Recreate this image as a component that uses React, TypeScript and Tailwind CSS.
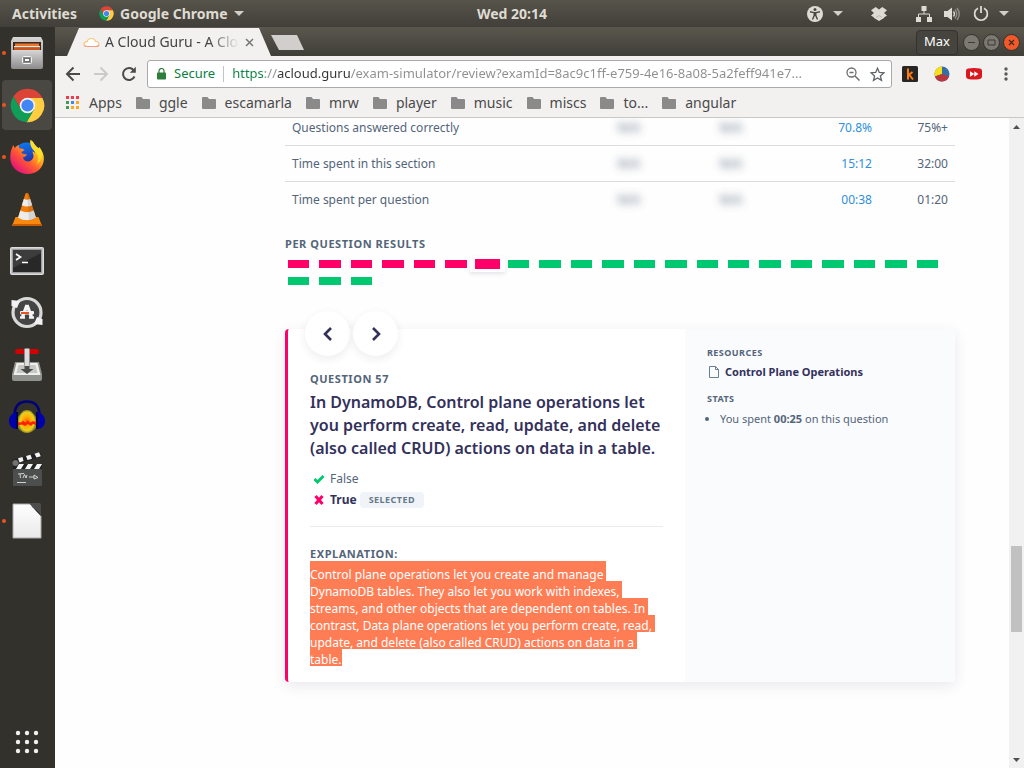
import React from "react";

const FONT = "font-['Noto_Sans','Open_Sans',sans-serif]";

function Caret() {
  return (
    <svg viewBox="0 0 10 5" className="h-[5px] w-[10px]" aria-hidden="true">
      <path d="M0 0h10L5 5z" fill="#d2cfc9" />
    </svg>
  );
}

function ChromeIcon({ className }: { className: string }) {
  const wedge = "M24 14H43.6A22 22 0 0 0 5.54 12.03L15.34 29Z";
  return (
    <svg viewBox="1 1 46 46" className={className} aria-hidden="true">
      <path d={wedge} fill="#db4437" />
      <path d={wedge} fill="#ffcd40" transform="rotate(120 24 24)" />
      <path d={wedge} fill="#0f9d58" transform="rotate(240 24 24)" />
      <circle cx="24" cy="24" r="10.2" fill="#f1f1f1" />
      <circle cx="24" cy="24" r="8" fill="#4285f4" />
    </svg>
  );
}

function FilesIcon() {
  return (
    <svg viewBox="0 0 36 36" className="size-9" aria-hidden="true">
      <defs>
        <linearGradient id="files" x1="0" y1="0" x2="0" y2="1">
          <stop offset="0" stopColor="#d6d6d6" />
          <stop offset="1" stopColor="#8f8f8f" />
        </linearGradient>
      </defs>
      <path d="M4 2h28l2 4v26q0 2-2 2H4q-2 0-2-2V6z" fill="url(#files)" />
      <rect x="4" y="7" width="28" height="9" fill="#3b2a22" />
      <rect x="6" y="8.500" width="24" height="2.500" fill="#e8772e" />
      <rect x="5" y="11" width="26" height="1.500" fill="#fbe3cf" />
      <rect x="5" y="12.500" width="26" height="2.500" fill="#c9541b" />
      <rect x="3" y="15" width="30" height="18" rx="1" fill="url(#files)" />
      <rect x="13.500" y="21.500" width="9" height="7" rx="1" fill="#8c8c8c" stroke="#f3f3f3" />
      <rect x="15.500" y="23.500" width="5" height="3" fill="#fff" stroke="#6d6d6d" />
    </svg>
  );
}

function FirefoxIcon() {
  return (
    <svg viewBox="0 0 36 36" className="size-9" aria-hidden="true">
      <defs>
        <linearGradient id="fox" x1="0.85" y1="0.1" x2="0.15" y2="0.9">
          <stop offset="0" stopColor="#fff44f" />
          <stop offset="0.35" stopColor="#ffa31f" />
          <stop offset="0.6" stopColor="#ff5634" />
          <stop offset="1" stopColor="#e3107f" />
        </linearGradient>
        <linearGradient id="globe" x1="0" y1="0" x2="0.3" y2="1">
          <stop offset="0" stopColor="#0a84ff" />
          <stop offset="1" stopColor="#2a1a8a" />
        </linearGradient>
      </defs>
      <circle cx="18" cy="17.500" r="14" fill="url(#globe)" />
      <path
        d="M4.500 6c.3 1.500.8 2.200 1.500 3 1-1.800 2.300-2.500 4-3-.4 1.600-.2 2.500.6 3.500 2-.3 3.600.2 5 1.500l-3 2c-.3 1.500.7 2 5.300 2.400-.5 1.600-2 2.200-4 3 .8 2.700 2.800 4.300 5.400 4.100 2.900-.2 5-2.400 5.200-5.200.1-1.900-.5-3.600-1.500-4.800 1.300.2 2.200.8 3 1.800C26.500 11 20.500 9 21.500 1c3.500 2 3.600 4.700 7 7.400 1 .8 1.500.8 2-.1 3 4 4.500 7.700 4.400 11.700C34.500 29 27.500 35 18.500 35 9.500 35 2 28.600 1.300 20 1 15 2 9.800 4.500 6z"
        fill="url(#fox)"
      />
      <path d="M21.500 1c-1 6 2 9.500 4.500 11.500 3.500 3 4.500 8 1.500 13 5-3.500 7.500-9.500 4-15.500l-1-1.700c-.5.900-1 .9-2 .1-3.400-2.700-3.500-5.400-7-7.400z" fill="#ffe226" opacity="0.85" />
    </svg>
  );
}

function VlcIcon() {
  return (
    <svg viewBox="0 0 36 36" className="size-9" aria-hidden="true">
      <path d="M6.500 26h23l3.500 9H3z" fill="#f8890c" />
      <path d="M3.600 33h28.800l.6 2H3z" fill="#c65b00" />
      <path d="M16.500 2.500q1.500-1 3 0L27 27q-9 5.500-18 0z" fill="#f47d0a" />
      <path d="M14.800 8q3.200 1.500 6.400 0l2 6.200q-5.200 2.400-10.400 0z" fill="#eee" />
      <path d="M11.300 19.500q6.700 3.400 13.400 0l2.300 7.300q-9 5-18 0z" fill="#ececec" />
      <path d="M18 2q1 0 1.500.5L27 27q-3.500 2.200-7 2.600z" fill="#000" opacity="0.1" />
    </svg>
  );
}

function TerminalIcon() {
  return (
    <svg viewBox="0 0 36 36" className="size-9" aria-hidden="true">
      <rect x="1.500" y="4.500" width="33" height="27" rx="1" fill="#8f8f8f" stroke="#e6e6e6" />
      <rect x="2.500" y="5.500" width="31" height="25" fill="none" stroke="#c4c4c4" strokeWidth="1.500" />
      <rect x="4" y="7" width="28" height="22" fill="#282828" />
      <path d="M4 7h28v3L4 25z" fill="#3c3c3c" />
      <path d="M7 11l4.500 3L7 17M13 19.500h6" fill="none" stroke="#fff" strokeWidth="1.700" />
    </svg>
  );
}

function UpdaterIcon() {
  return (
    <svg viewBox="0 0 36 36" className="size-9" aria-hidden="true">
      <circle cx="18" cy="17.500" r="14" fill="#454545" stroke="#d9d9d9" strokeWidth="3.200" />
      <path d="M2.500 11V5l8.500 1-3 7zM33.500 24v6L25 29l3-7z" fill="#f2f2f2" />
      <path d="M18 10l-4.500 12M18 10l4.500 12" stroke="#f5f5f5" strokeWidth="3.400" />
      <path d="M11 22.500h5M20 22.500h5" stroke="#f5f5f5" strokeWidth="2.600" />
      <rect x="11" y="16" width="14" height="3.500" rx="1" fill="#f5f5f5" />
      <rect x="12" y="17" width="8" height="2" fill="#e9541f" />
    </svg>
  );
}

function InstallerIcon() {
  return (
    <svg viewBox="0 0 36 36" className="size-9" aria-hidden="true">
      <path d="M6 15h24l3 12v5q0 2-2 2H5q-2 0-2-2v-5z" fill="#90928e" />
      <path d="M7.500 16h21l3 12h-27z" fill="#eeeeec" />
      <path d="M9.500 18h17l2 8h-21z" fill="#c6c8c4" />
      <rect x="6" y="2" width="24" height="5" rx="2.500" fill="#d40000" />
      <rect x="15.500" y="1.500" width="5" height="18" rx="1" fill="#dcdcdc" stroke="#8a8a8a" strokeWidth="0.800" />
      <path d="M15.500 19h5v3h4L18 27l-6.500-5h4z" fill="#4a4a4a" />
    </svg>
  );
}

function AudacityIcon() {
  return (
    <svg viewBox="0 0 36 36" className="size-9" aria-hidden="true">
      <defs>
        <radialGradient id="wave">
          <stop offset="0" stopColor="#ff5a00" />
          <stop offset="0.45" stopColor="#ffb000" />
          <stop offset="0.8" stopColor="#e8cf20" />
          <stop offset="1" stopColor="#8f8420" />
        </radialGradient>
      </defs>
      <path d="M9 18q3-4 5-6 4-2 8 0 2 2 5 6v11q-4 5-9 5t-9-5z" fill="url(#wave)" />
      <path d="M9 23l3 .5 2-2 2 2 3-2 2 2 3-1.500 3 1v3l-3-1-2 2-3-2-3 2-3-1.500-4 1z" fill="#ff2200" />
      <path d="M5.500 16Q6 2.500 18 2.500T30.500 16" fill="none" stroke="#000078" strokeWidth="2.500" />
      <path d="M8.500 13v17C3 30 0 26.500 0 22s3-8.500 8.500-9zM27.500 13v17c5.500 0 8.500-3.500 8.500-8s-3-8.500-8.500-9z" fill="#0000a8" />
      <path d="M8 13v17M28 13v17" stroke="#00004d" strokeWidth="2" />
    </svg>
  );
}

function ClapperIcon() {
  return (
    <svg viewBox="0 0 36 36" className="size-9" aria-hidden="true">
      <path d="M3 9L31 1l1.500 5L5 14z" fill="#222" />
      <path d="M9 7.300l4.500-1.300 1 4-4 1.500zM17 5l4.500-1.300 1.500 4-4.500 1.300zM25.500 2.700L30 1.300l1.800 4L27.500 6.500z" fill="#f4f4f4" />
      <rect x="4" y="13" width="29" height="6" fill="#222" />
      <path d="M10 13h5l-3 5H7zM19 13h5l-3 5h-5zM28 13h5l-3 5h-5z" fill="#f4f4f4" />
      <rect x="4" y="18" width="29" height="17" rx="1" fill="#4d4f4f" />
      <circle cx="6.500" cy="12" r="3" fill="#707272" />
      <path d="M9 23l6-.5M11 23l.5 4M14 27l1.500-3.500L17 27l1-3M20 26h5M25 24l4 2.500-4 1.500zM8 31.500h9" stroke="#dedede" strokeWidth="0.900" fill="none" />
    </svg>
  );
}

function WriterIcon() {
  return (
    <svg viewBox="0 0 36 36" className="size-9" aria-hidden="true">
      <defs>
        <linearGradient id="doc" x1="0" y1="0" x2="0" y2="1">
          <stop offset="0" stopColor="#fff" />
          <stop offset="1" stopColor="#e9e9e9" />
        </linearGradient>
      </defs>
      <path d="M4 1h17l11 12v22H4z" fill="url(#doc)" stroke="#a9a9a9" />
      <path d="M20 0h10q2 0 2 2v11z" fill="#4d4d4d" />
      <path d="M20 0q3 3 4 5 5 2 8 8z" fill="#262626" />
    </svg>
  );
}

const dock = [
  { name: "Files", icon: <FilesIcon />, running: true, active: false },
  { name: "Google Chrome", icon: <ChromeIcon className="size-[35px]" />, running: true, active: true },
  { name: "Firefox", icon: <FirefoxIcon />, running: true, active: false },
  { name: "VLC", icon: <VlcIcon />, running: false, active: false },
  { name: "Terminal", icon: <TerminalIcon />, running: false, active: false },
  { name: "Software Updater", icon: <UpdaterIcon />, running: false, active: false },
  { name: "Package Installer", icon: <InstallerIcon />, running: false, active: false },
  { name: "Audacity", icon: <AudacityIcon />, running: false, active: false },
  { name: "Video Editor", icon: <ClapperIcon />, running: false, active: false },
  { name: "LibreOffice", icon: <WriterIcon />, running: true, active: false },
];

function TopBar() {
  return (
    <header className="grid h-[27px] shrink-0 grid-cols-[1fr_auto_1fr] items-center bg-linear-to-b from-[#57544b] to-[#413f39] text-sm font-bold text-[#dfdbd2]">
      <div className="flex items-center">
        <button type="button" className="pl-3">Activities</button>
        <button type="button" className="flex items-center gap-1.5 pl-[22px]">
          <ChromeIcon className="size-[15px]" />
          <span>Google Chrome</span>
          <Caret />
        </button>
      </div>
      <div>Wed 20:14</div>
      <div className="flex items-center justify-end pr-[15px]">
        <button type="button" aria-label="Accessibility" className="flex items-center gap-2.5">
          <svg viewBox="0 0 16 16" className="size-4">
            <circle cx="8" cy="8" r="8" fill="#dfdbd2" />
            <circle cx="8" cy="3.400" r="1.500" fill="#4a4841" />
            <path d="M3 5.700l4 .9h2l4-.9M7.200 6.500v3L5.500 13.500M8.800 6.500v3l1.700 4M8 6.500v3.500" stroke="#4a4841" strokeWidth="1.400" fill="none" />
          </svg>
          <Caret />
        </button>
        <button type="button" aria-label="Dropbox" className="ml-7">
          <svg viewBox="0 0 16 14" className="h-[14px] w-4">
            <path d="M4.700 0L8 2.500 11.300 0 16 3.300 13 6l3 2.500-3 2V11l-5 3-5-3v-.5L0 8.500 3 6 0 3.300z" fill="#dfdbd2" />
            <path d="M8 8.500l-3 2M8 8.500l3 2" stroke="#a8a59d" strokeWidth="0.700" />
          </svg>
        </button>
        <button type="button" aria-label="Network" className="ml-[29px]">
          <svg viewBox="0 0 16 16" className="size-4">
            <path d="M5.500 0h5v5h-5zM0 11h5v5H0zM11 11h5v5h-5z" fill="#dfdbd2" />
            <path d="M8 5v3M2.500 11V8h11v3" stroke="#dfdbd2" fill="none" />
          </svg>
        </button>
        <button type="button" aria-label="Volume" className="ml-3">
          <svg viewBox="0 0 16 16" className="size-4">
            <path d="M0 5h3.500L8 1.500v13L3.500 11H0z" fill="#dfdbd2" />
            <path d="M9.500 5.500q2 2.500 0 5" stroke="#dfdbd2" strokeWidth="1.300" fill="none" />
            <path d="M11 3.500q3.500 4.500 0 9M13 2q4.500 6 0 12" stroke="#96938b" strokeWidth="1.300" fill="none" />
          </svg>
        </button>
        <button type="button" aria-label="Power" className="ml-[13px] flex items-center gap-2.5">
          <svg viewBox="0 0 16 16" className="size-4">
            <path d="M5 2.200a6.400 6.400 0 1 0 6 0" stroke="#dfdbd2" strokeWidth="1.700" fill="none" />
            <path d="M8 0v7" stroke="#dfdbd2" strokeWidth="1.800" />
          </svg>
          <Caret />
        </button>
      </div>
    </header>
  );
}

function Dock() {
  return (
    <nav aria-label="Dock" className="flex w-[55px] shrink-0 flex-col gap-0.5 bg-[#33312c] py-px pl-0.5">
      {dock.map((item) => (
        <button
          key={item.name}
          type="button"
          aria-label={item.name}
          className={`relative flex size-[50px] shrink-0 items-center justify-center rounded ${item.active ? "bg-[#4a4843]" : ""}`}
        >
          {item.running && <span className="absolute top-[23px] left-0 size-1 rounded-full bg-[#e95420]" />}
          {item.icon}
        </button>
      ))}
      <button type="button" aria-label="Show Applications" className="mt-auto flex size-[50px] items-center justify-center">
        <svg viewBox="0 0 24 24" className="size-6" fill="#f2f1f0">
          {[3, 12, 21].map((y) => [3, 12, 21].map((x) => <circle key={`${x}-${y}`} cx={x} cy={y} r="2.200" />))}
        </svg>
      </button>
    </nav>
  );
}

function TabStrip() {
  return (
    <div className="flex h-[29px] shrink-0 items-end bg-linear-to-b from-[#5a574e] to-[#3f3e38] pl-3">
      <div className="flex h-7 w-[204px] items-center bg-[#f2f1f0] pl-4 text-sm text-[#444] [clip-path:polygon(12px_0,calc(100%-12px)_0,100%_100%,0_100%)]">
        <svg viewBox="0 0 17 11" className="h-[11px] w-[17px] shrink-0" fill="none" aria-hidden="true">
          <path d="M4 9.500Q1 9.500 1 7.200T4 4.700Q5 1.500 8.500 1.500t4 3Q16 4.700 16 7.200 16 9.500 13 9.500z" fill="#fff" stroke="#fcc27a" strokeWidth="1.200" />
          <path d="M1.300 8.500Q2 9.500 4 9.500h9q2.300 0 2.800-1.200" stroke="#f79b86" strokeWidth="1.200" />
        </svg>
        <span className="ml-[5px] w-[134px] shrink-0 whitespace-nowrap [mask-image:linear-gradient(to_right,black_104px,transparent_134px)]">
          A Cloud Guru - A Clo
        </span>
        <button type="button" aria-label="Close tab" className="ml-1.5">
          <svg viewBox="0 0 9 9" className="size-[9px]">
            <path d="M1 1l7 7M8 1L1 8" stroke="#777" strokeWidth="1.500" />
          </svg>
        </button>
      </div>
      <button
        type="button"
        aria-label="New tab"
        className="mb-1.5 h-[15px] w-[33px] bg-[#d1cfcc] [clip-path:polygon(0_0,26px_0,100%_100%,8px_100%)]"
      />
      <div className="ml-auto flex h-full items-center gap-[3px] pt-px pr-1">
        <button type="button" className="mr-0.5 flex h-[25px] items-center rounded border border-[#33322d] bg-[#45443e] px-[7px] text-[13px] text-white">
          Max
        </button>
        <button type="button" aria-label="Minimize" className="flex size-[17px] items-center justify-center rounded-full border border-[#33322d] bg-[#7b7972]">
          <svg viewBox="0 0 9 9" className="size-[9px]"><path d="M1 4.500h7" stroke="#3c3b37" /></svg>
        </button>
        <button type="button" aria-label="Maximize" className="flex size-[17px] items-center justify-center rounded-full border border-[#33322d] bg-[#7b7972]">
          <svg viewBox="0 0 9 9" className="size-[9px]"><path d="M1 2h7v5H1z" stroke="#3c3b37" fill="none" /></svg>
        </button>
        <button type="button" aria-label="Close" className="flex size-[17px] items-center justify-center rounded-full border border-[#33322d] bg-[#f1592a]">
          <svg viewBox="0 0 9 9" className="size-[9px]"><path d="M2 2l5 5M7 2L2 7" stroke="#3c2a1c" strokeWidth="1.200" /></svg>
        </button>
      </div>
    </div>
  );
}

function Toolbar() {
  return (
    <div className="flex h-9 shrink-0 items-center bg-[#f2f1f0] pl-2.5">
      <button type="button" aria-label="Back">
        <svg viewBox="0 0 16 16" className="size-4" fill="none" stroke="#4a4a4a" strokeWidth="2"><path d="M15 8H2M8.500 1.500L2 8l6.500 6.500" /></svg>
      </button>
      <button type="button" aria-label="Forward" className="ml-3">
        <svg viewBox="0 0 16 16" className="size-4" fill="none" stroke="#cbcac9" strokeWidth="2"><path d="M1 8h13M7.500 1.500L14 8l-6.500 6.500" /></svg>
      </button>
      <button type="button" aria-label="Reload" className="ml-3">
        <svg viewBox="0 0 16 16" className="size-4" fill="none" stroke="#4a4a4a" strokeWidth="2"><path d="M13.500 10.500A6 6 0 1 1 12.500 4" /><path d="M14.800.8v6h-6z" fill="#4a4a4a" stroke="none" /></svg>
      </button>
      <div className="ml-2.5 flex h-7 min-w-0 flex-1 items-center rounded-[3px] border border-[#a9a9ad] bg-white pl-[9px]">
        <svg viewBox="0 0 9 12" className="h-3 w-[9px] shrink-0" aria-hidden="true">
          <path d="M2 5V3a2.500 2.500 0 0 1 5 0v2" fill="none" stroke="#2f7d3b" strokeWidth="1.200" />
          <rect y="4.500" width="9" height="7" rx="0.800" fill="#2f7d3b" />
        </svg>
        <span className="ml-2 text-[13px] text-[#0b8043]">Secure</span>
        <span className="mx-2 h-4 w-px shrink-0 bg-[#c4c4c4]" />
        <input
          aria-label="Address"
          defaultValue="https://acloud.guru/exam-simulator/review?examId=8ac9c1ff-e759-4e16-8a08-5a2feff941e7..."
          className="min-w-0 flex-1 bg-[linear-gradient(to_right,#0b8043_33px,#8e8e8e_33px,#8e8e8e_45px,#333_45px,#333_118px,#8e8e8e_118px)] bg-clip-text text-[13px] text-transparent outline-none"
        />
        <button type="button" aria-label="Zoom" className="ml-2.5">
          <svg viewBox="0 0 14 14" className="size-3.5" fill="none" stroke="#6e6e6e"><circle cx="5.500" cy="5.500" r="4.500" strokeWidth="1.300" /><path d="M3.500 5.500h4M9 9l4.500 4.500" strokeWidth="1.500" /></svg>
        </button>
        <button type="button" aria-label="Bookmark" className="mr-1.5 ml-2.5">
          <svg viewBox="0 0 15 15" className="size-[15px]" fill="none" stroke="#5f6368" strokeWidth="1.300"><path d="M7.500 1.300l1.800 4.200 4.600.4-3.500 3 1.100 4.500-4-2.400-4 2.400 1.100-4.500-3.500-3 4.600-.4z" /></svg>
        </button>
      </div>
      <button type="button" aria-label="Extension k" className="ml-2.5">
        <svg viewBox="0 0 16 16" className="size-4"><rect width="16" height="16" rx="1.500" fill="#262626" /><path d="M6 2.500v11M6 9.500l4.500-3.500M7 8.500l4 5" stroke="#ff7a0f" strokeWidth="2" fill="none" /></svg>
      </button>
      <button type="button" aria-label="Extension chart" className="ml-4">
        <svg viewBox="0 0 16 16" className="size-4"><circle cx="8" cy="8" r="7.500" fill="#356fa5" /><path d="M8 8V.5A7.500 7.500 0 0 0 .9 10.400z" fill="#f7e017" /><path d="M8 8L.9 10.400A7.500 7.500 0 0 0 15 10.600z" fill="#b8383d" /></svg>
      </button>
      <button type="button" aria-label="Extension video" className="ml-4">
        <svg viewBox="0 0 16 14" className="h-[14px] w-4"><path d="M2 1.500Q8 .5 14 1.500q2 .3 2 2.500v5q0 2.800-2 3-6 1-12 0-2-.2-2-3V4q0-2.200 2-2.500z" fill="#d8171f" /><path d="M4 4.200L8.300 7 4 9.800zM8.300 4.200L12.500 7 8.300 9.800z" fill="#fff" /></svg>
      </button>
      <button type="button" aria-label="Menu" className="mr-[10px] ml-4">
        <svg viewBox="0 0 16 16" className="size-4" fill="#5a5a5a"><circle cx="8" cy="3" r="1.700" /><circle cx="8" cy="8" r="1.700" /><circle cx="8" cy="13" r="1.700" /></svg>
      </button>
    </div>
  );
}

const appDots = ["#f03a4d", "#f03a4d", "#f03a4d", "#3f9b58", "#4285f4", "#f9a825", "#3f9b58", "#f9a825", "#f9a825"];

function Bookmarks() {
  const folders = ["ggle", "escamarla", "mrw", "player", "music", "miscs", "to...", "angular"];
  return (
    <nav aria-label="Bookmarks" className="flex h-[26px] shrink-0 items-center gap-[14px] border-b border-[#c9c8c7] bg-[#f2f1f0] pb-1 pl-[11px] text-sm text-[#4a4a4a]">
      <button type="button" className="flex items-center gap-2.5">
        <svg viewBox="0 0 13 13" className="size-[13px]" aria-hidden="true">
          {appDots.map((c, i) => (
            <rect key={i} x={(i % 3) * 5} y={Math.floor(i / 3) * 5} width="3" height="3" fill={c} />
          ))}
        </svg>
        <span>Apps</span>
      </button>
      {folders.map((f) => (
        <button key={f} type="button" className="flex items-center gap-[9px]">
          <svg viewBox="0 0 14 12" className="h-3 w-3.5" aria-hidden="true">
            <path d="M1 0h4.500L7 2h6q1 0 1 1v8q0 1-1 1H1q-1 0-1-1V1q0-1 1-1z" fill="#8a8a8a" />
          </svg>
          <span>{f}</span>
        </button>
      ))}
    </nav>
  );
}

const stats = [
  { label: "Questions answered correctly", you: "70.8%", goal: "75%+" },
  { label: "Time spent in this section", you: "15:12", goal: "32:00" },
  { label: "Time spent per question", you: "00:38", goal: "01:20" },
];

function StatsTable() {
  return (
    <table className="-mt-[9px] w-full table-fixed text-xs text-[#54657a]">
      <tbody>
        {stats.map((s) => (
          <tr key={s.label} className="h-9 border-b border-[#dcdcdc] last:border-b-0">
            <td className="pt-0.5 pl-[7px]">{s.label}</td>
            <td className="w-[102px] pt-0.5 text-center"><span className="inline-block font-semibold opacity-80 blur-[4px]">N/A</span></td>
            <td className="w-[102px] pt-0.5 text-center"><span className="inline-block font-semibold opacity-80 blur-[4px]">N/A</span></td>
            <td className="w-[90px] pt-0.5 text-right text-[#2f8fdd]">{s.you}</td>
            <td className="w-[83px] pt-0.5 pr-[7px] text-right">{s.goal}</td>
          </tr>
        ))}
      </tbody>
    </table>
  );
}

function ResultBars() {
  return (
    <div className="mt-2 grid grid-cols-[repeat(21,minmax(0,1fr))] gap-x-2.5 gap-y-[9px] pr-[17px] pl-[3px]">
      {Array.from({ length: 24 }, (_, i) => {
        if (i === 6) {
          return (
            <button
              key={i}
              type="button"
              aria-label={`Question ${i + 1}, selected`}
              className="-mx-[7px] -my-1 h-4 border-x-[5px] border-y-[3px] border-white bg-[#ff0068] shadow-[0_2px_4px_rgba(50,50,93,0.12)]"
            />
          );
        }
        return (
          <button key={i} type="button" aria-label={`Question ${i + 1}`} className={`h-2 ${i < 6 ? "bg-[#ff0068]" : "bg-[#00c871]"}`} />
        );
      })}
    </div>
  );
}

const explanation = [
  "DynamoDB tables. They also let you work with indexes,",
  "streams, and other objects that are dependent on tables. In",
  "contrast, Data plane operations let you perform create, read,",
  "update, and delete (also called CRUD) actions on data in a",
];

function QuestionCard() {
  const round = "flex size-[45px] items-center justify-center rounded-full bg-white shadow-[0_3px_8px_rgba(50,50,93,0.09)]";
  return (
    <article className="mt-11 flex rounded border-l-[3px] border-[#ff0068] bg-white shadow-[0_4px_14px_rgba(50,50,93,0.1)]">
      <div className="min-w-0 flex-1 px-[22px] pb-4">
        <div className="-mt-[18px] -ml-[5px] flex gap-[3px]">
          <button type="button" aria-label="Previous question" className={round}>
            <svg viewBox="0 0 12 14" className="h-3.5 w-3" fill="none" stroke="#33315b" strokeWidth="2.600"><path d="M9 1L3 7l6 6" /></svg>
          </button>
          <button type="button" aria-label="Next question" className={round}>
            <svg viewBox="0 0 12 14" className="h-3.5 w-3" fill="none" stroke="#33315b" strokeWidth="2.600"><path d="M3 1l6 6-6 6" /></svg>
          </button>
        </div>
        <h3 className="mt-[15px] text-[11px] leading-4 font-bold tracking-wider text-[#54657a] uppercase">Question 57</h3>
        <h2 className="mt-1 text-base leading-[23px] font-semibold text-[#33315b]">
          In DynamoDB, Control plane operations let<br />
          you perform create, read, update, and delete<br />
          (also called CRUD) actions on data in a table.
        </h2>
        <ul className="mt-2 pl-[3px] text-xs leading-[21px] text-[#54657a]">
          <li className="flex items-center gap-[5px]">
            <svg viewBox="0 0 12 10" className="h-2.5 w-3" aria-hidden="true"><path d="M1.500 5l3 3L10.500 2" stroke="#00c871" strokeWidth="2.900" fill="none" /></svg>
            <span>False</span>
          </li>
          <li className="flex items-center gap-[5px] font-bold text-[#33315b]">
            <svg viewBox="0 0 12 10" className="h-2.5 w-3" aria-hidden="true"><path d="M2.500 1l7 8M9.500 1l-7 8" stroke="#ff0068" strokeWidth="3" fill="none" /></svg>
            <span>True</span>
            <span className="-ml-0.5 rounded-sm bg-[#f0f4f8] px-[9px] text-[9px] leading-4 tracking-wider text-[#66788a]">SELECTED</span>
          </li>
        </ul>
        <hr className="mt-4 border-[#ebebeb]" />
        <h3 className="mt-[19px] text-[11px] leading-4 font-bold tracking-wider text-[#54657a] uppercase">Explanation:</h3>
        <p className="-mt-px text-xs leading-[21px] whitespace-nowrap text-white">
          <span className="block h-5 w-fit bg-[#ff7d55] pt-[3px] pr-[3px]">Control plane operations let you create and manage</span>
          {explanation.map((line) => (
            <span key={line} className="block h-[17px] w-fit bg-[#ff7d55] pr-[3px]">{line}</span>
          ))}
          <span className="block h-[17px] w-fit bg-[#ff7d55]">table.</span>
        </p>
      </div>
      <aside className="w-[270px] shrink-0 rounded-r bg-[#fafbfd] px-[22px] pt-4 text-[11px] leading-4 text-[#54657a]">
        <h4 className="text-[9px] font-bold tracking-wider uppercase">Resources</h4>
        <a href="#control-plane" className="mt-[3px] flex items-center gap-1.5 pl-0.5 font-bold text-[#33315b]">
          <svg viewBox="0 0 10 12" className="h-3 w-2.5" fill="none" stroke="#6a7f95" aria-hidden="true"><path d="M.5.500h6l3 3v8h-9zM6.500.5v3h3" /></svg>
          <span>Control Plane Operations</span>
        </a>
        <h4 className="mt-[11px] text-[9px] font-bold tracking-wider uppercase">Stats</h4>
        <ul className="mt-1 list-disc pl-[13px]">
          <li>You spent <b>00:25</b> on this question</li>
        </ul>
      </aside>
    </article>
  );
}

function Scrollbar() {
  return (
    <div className="flex w-[15px] shrink-0 flex-col items-center bg-[#f1f1f1]" aria-hidden="true">
      <svg viewBox="0 0 7 4" className="mt-[7px] h-1 w-[7px]"><path d="M0 4h7L3.500 0z" fill="#505050" /></svg>
      <div className="flex-[416]" />
      <div className="w-[11px] flex-[86] bg-[#c1c1c1]" />
      <div className="flex-[126]" />
      <svg viewBox="0 0 7 4" className="mb-1.5 h-1 w-[7px]"><path d="M0 0h7L3.500 4z" fill="#505050" /></svg>
    </div>
  );
}

export default function App() {
  return (
    <div className={`flex h-screen flex-col overflow-hidden bg-white ${FONT}`}>
      <TopBar />
      <div className="flex min-h-0 flex-1">
        <Dock />
        <div className="flex min-w-0 flex-1 flex-col">
          <TabStrip />
          <Toolbar />
          <Bookmarks />
          <div className="flex min-h-0 flex-1">
            <main className="min-w-0 flex-1 overflow-hidden bg-[#fefefe] pr-[54px] pl-[230px]">
              <StatsTable />
              <h3 className="mt-[19px] text-[11px] leading-4 font-bold tracking-wider text-[#54657a] uppercase">Per question results</h3>
              <ResultBars />
              <QuestionCard />
            </main>
            <Scrollbar />
          </div>
        </div>
      </div>
    </div>
  );
}
